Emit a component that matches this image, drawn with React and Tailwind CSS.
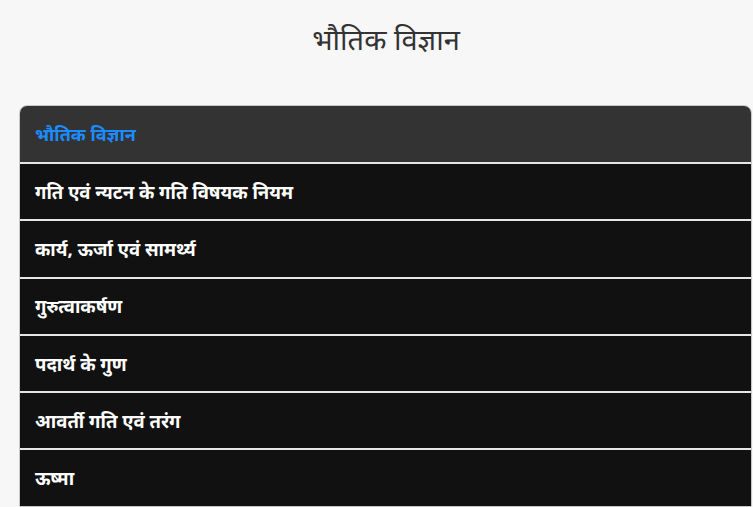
export default function App() {
  const items = [
    "गति एवं न्यटन के गति विषयक नियम",
    "कार्य, ऊर्जा एवं सामर्थ्य",
    "गुरुत्वाकर्षण",
    "पदार्थ के गुण",
    "आवर्ती गति एवं तरंग",
    "ऊष्मा",
  ];
  return (
    <div className="min-h-[507px] bg-[#f7f7f7] overflow-hidden" style={{ fontFamily: '"Noto Sans", "Open Sans", sans-serif' }}>
      <h1 className="pt-[18px] pl-[19px] h-[105px] text-center text-[29px] leading-[42px] font-normal text-[#333]">भौतिक विज्ञान</h1>
      <div className="ml-[19px] mr-px rounded-t-[8px] border border-[#c8c8c8] overflow-hidden">
        <div className="h-[56px] bg-[#333] flex items-center px-[15px] text-[18px] font-bold text-[#1a8cff]">भौतिक विज्ञान</div>
        {items.map((t) => (
          <div key={t} className="h-[57.3px] bg-[#111] border-t-2 border-[#e6e6e6] flex items-center px-[15px] text-[18.5px] font-bold text-white">
            {t}
          </div>
        ))}
      </div>
    </div>
  );
}
